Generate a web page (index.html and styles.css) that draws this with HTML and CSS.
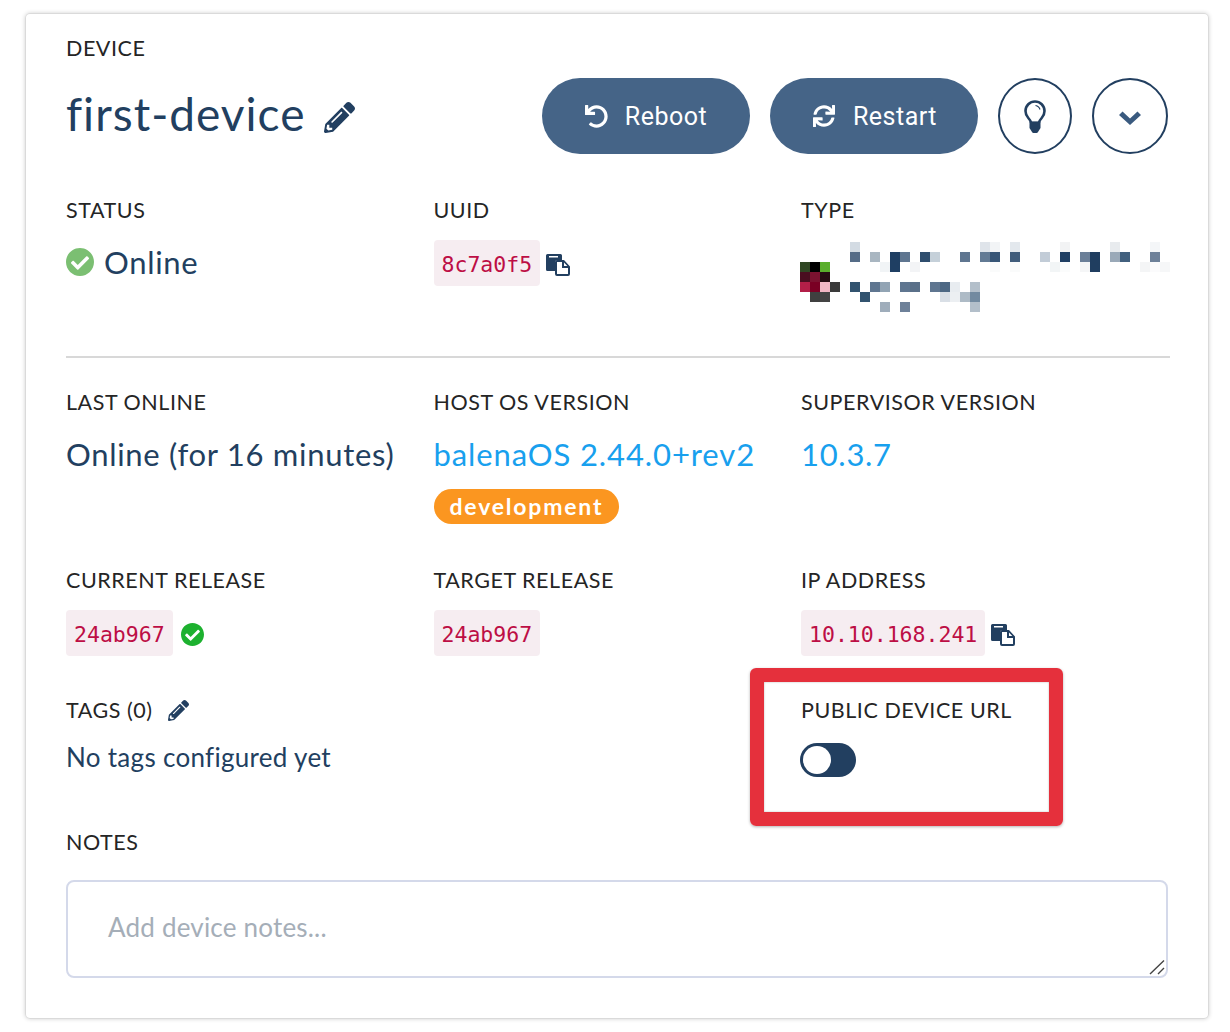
FILE: index.html
```html
<!DOCTYPE html>
<html lang="en">
<head>
<meta charset="utf-8">
<title>first-device</title>
<link rel="stylesheet" href="styles.css">
</head>
<body>
<svg class="defs" width="0" height="0" aria-hidden="true">
  <defs>
    <symbol id="i-pencil" viewBox="0 0 512 512"><path d="M497.9 142.1l-46.1 46.1c-4.7 4.7-12.3 4.7-17 0l-111-111c-4.7-4.7-4.7-12.3 0-17l46.1-46.1c18.7-18.7 49.1-18.7 67.9 0l60.1 60.1c18.8 18.7 18.8 49.1 0 67.9zM284.2 99.8L21.6 362.4.4 483.9c-2.9 16.4 11.4 30.6 27.8 27.8l121.5-21.3 262.6-262.6c4.7-4.7 4.7-12.3 0-17l-111-111c-4.8-4.7-12.4-4.7-17.1 0zM124.1 339.9c-5.5-5.5-5.5-14.3 0-19.8l154-154c5.5-5.5 14.3-5.5 19.8 0s5.5 14.3 0 19.8l-154 154c-5.5 5.5-14.3 5.5-19.8 0zM88 424h48v36.3l-64.5 11.3-31.1-31.1L51.7 376H88v48z"/></symbol>
    <symbol id="i-check" viewBox="8 8 496 496"><path d="M504 256c0 136.967-111.033 248-248 248S8 392.967 8 256 119.033 8 256 8s248 111.033 248 248zM227.314 387.314l184-184c6.248-6.248 6.248-16.379 0-22.627l-22.627-22.627c-6.248-6.249-16.379-6.249-22.628 0L216 308.118l-70.059-70.059c-6.248-6.248-16.379-6.248-22.628 0l-22.627 22.627c-6.248 6.248-6.248 16.379 0 22.627l104 104c6.249 6.249 16.379 6.249 22.628.001z"/></symbol>
    <symbol id="i-copy" viewBox="0 0 24 22"><path d="M1.5 0h13a1.500 1.500 0 0 1 1.500 1.500V6h-4.500a2.500 2.500 0 0 0-2.500 2.500V17H1.500A1.500 1.500 0 0 1 0 15.500V1.500A1.500 1.500 0 0 1 1.500 0z"/><rect x="3" y="2" width="9" height="1.500" fill="#fff"/><path fill="#fff" d="M10 7h7v6h6v8H10z"/><path d="M9 8a2 2 0 0 1 2-2h7l6 6.500V20a2 2 0 0 1-2 2H11a2 2 0 0 1-2-2zm2 0v12h11v-6h-6V8zm7 .500V12h3.300z"/></symbol>
  </defs>
</svg>

<main class="card">
  <p class="label label-device">DEVICE</p>
  <header class="head">
    <h1 class="title">first-device</h1>
    <svg class="title-pencil icon"><use href="#i-pencil"/></svg>
    <div class="actions">
      <button class="btn" type="button">
        <svg class="btn-icon" viewBox="0 0 512 512"><path d="M212.333 224.333H12c-6.627 0-12-5.373-12-12V12C0 5.373 5.373 0 12 0h48c6.627 0 12 5.373 12 12v78.112C117.773 39.279 184.26 7.470 258.175 8.007c136.906.994 246.448 111.623 246.157 248.532C504.041 393.258 393.120 504 256.333 504c-64.089 0-122.496-24.313-166.510-64.215-5.099-4.622-5.334-12.554-.467-17.420l33.967-33.967c4.474-4.474 11.662-4.717 16.401-.525C170.760 415.336 211.580 432 256.333 432c97.268 0 176-78.716 176-176 0-97.267-78.716-176-176-176-58.496 0-110.280 28.476-142.274 72.333h98.274c6.627 0 12 5.373 12 12v48c0 6.627-5.373 12-12 12z"/></svg>
        Reboot
      </button>
      <button class="btn btn-restart" type="button">
        <svg class="btn-icon" viewBox="0 0 512 512"><path d="M440.650 12.570l4 82.770A247.160 247.160 0 0 0 255.830 8C134.730 8 33.910 94.920 12.290 209.820A12 12 0 0 0 24.090 224h49.050a12 12 0 0 0 11.670-9.260 175.910 175.910 0 0 1 317-56.940l-101.460-4.860a12 12 0 0 0-12.570 12v47.410a12 12 0 0 0 12 12H500a12 12 0 0 0 12-12V12a12 12 0 0 0-12-12h-47.370a12 12 0 0 0-11.980 12.570zM255.830 432a175.610 175.610 0 0 1-146-77.800l101.800 4.870a12 12 0 0 0 12.570-12v-47.400a12 12 0 0 0-12-12H12a12 12 0 0 0-12 12V500a12 12 0 0 0 12 12h47.350a12 12 0 0 0 12-12.600l-4.150-82.570A247.170 247.170 0 0 0 255.830 504c121.110 0 221.930-86.920 243.550-201.820a12 12 0 0 0-11.800-14.180h-49.050a12 12 0 0 0-11.670 9.260A175.860 175.860 0 0 1 255.830 432z"/></svg>
        Restart
      </button>
      <button class="round round-bulb" type="button" aria-label="Hint">
        <svg class="bulb" viewBox="0 0 22 33">
          <path class="bulb-glass" d="M11 1.500a9.500 9.500 0 0 0-9.500 9.500c0 3 1 5 2.800 7 1.500 1.700 2.700 3.500 3 5h7.400c.3-1.500 1.500-3.300 3-5 1.800-2 2.800-4 2.800-7A9.500 9.500 0 0 0 11 1.500z"/>
          <path class="bulb-shine" d="M11.500 5.500a5.500 5.500 0 0 1 4.500 4"/>
          <path class="bulb-base" d="M5.500 21.500h11V28l-2.500 4a2 2 0 0 1-1.500 1h-3a2 2 0 0 1-1.500-1l-2.500-4z"/>
        </svg>
      </button>
      <button class="round" type="button" aria-label="More">
        <svg class="chev" viewBox="0 0 22 14"><path d="M0 4L3.500.5 11 7.500 18.500.5 22 4 11 14z"/></svg>
      </button>
    </div>
  </header>

  <section class="grid row-status">
    <div>
      <p class="label">STATUS</p>
      <div class="value value-text"><svg class="status-check"><use href="#i-check"/></svg>Online</div>
    </div>
    <div>
      <p class="label">UUID</p>
      <div class="value"><code class="code">8c7a0f5</code><svg class="copy icon"><use href="#i-copy"/></svg></div>
    </div>
    <div>
      <p class="label">TYPE</p>
      <svg class="pixels" width="370" height="70" viewBox="800 242 370 70" shape-rendering="crispEdges" role="img" aria-label="Blurred device type">
        <g>
          <rect x="850" y="242" width="10" height="10" fill="#d3dbe3"/><rect x="980" y="242" width="10" height="10" fill="#dfe4ea"/><rect x="990" y="242" width="10" height="10" fill="#f2f4f6"/><rect x="1010" y="242" width="10" height="10" fill="#e3e8ed"/><rect x="1060" y="242" width="10" height="10" fill="#f2f3f4"/><rect x="1110" y="242" width="10" height="10" fill="#e8ebee"/><rect x="1150" y="242" width="10" height="10" fill="#f4f6f8"/>
        </g>
        <g>
          <rect x="850" y="252" width="10" height="10" fill="#556c87"/><rect x="870" y="252" width="10" height="10" fill="#a9b6c1"/><rect x="890" y="252" width="10" height="10" fill="#1f3f63"/><rect x="900" y="252" width="10" height="10" fill="#5f7690"/><rect x="920" y="252" width="10" height="10" fill="#2f4e6e"/><rect x="930" y="252" width="10" height="10" fill="#c5d0d9"/><rect x="960" y="252" width="10" height="10" fill="#5f7690"/><rect x="980" y="252" width="10" height="10" fill="#627a94"/><rect x="990" y="252" width="10" height="10" fill="#375576"/><rect x="1010" y="252" width="10" height="10" fill="#405c7b"/><rect x="1040" y="252" width="10" height="10" fill="#c2ccd7"/><rect x="1060" y="252" width="10" height="10" fill="#1f3f63"/><rect x="1080" y="252" width="10" height="10" fill="#6b7f98"/><rect x="1090" y="252" width="10" height="10" fill="#203e60"/><rect x="1110" y="252" width="10" height="10" fill="#9aa9b8"/><rect x="1120" y="252" width="10" height="10" fill="#42607e"/><rect x="1150" y="252" width="10" height="10" fill="#6e8199"/>
        </g>
        <g>
          <rect x="800" y="262" width="10" height="10" fill="#2f4623"/><rect x="810" y="262" width="10" height="10" fill="#000"/><rect x="820" y="262" width="10" height="10" fill="#5aae2c"/><rect x="880" y="262" width="10" height="10" fill="#f1f4f6"/><rect x="890" y="262" width="10" height="10" fill="#1f3f63"/><rect x="910" y="262" width="10" height="10" fill="#f3f4f6"/><rect x="990" y="262" width="10" height="10" fill="#fafbfb"/><rect x="1010" y="262" width="10" height="10" fill="#fafbfb"/><rect x="1050" y="262" width="10" height="10" fill="#f2f5f6"/><rect x="1060" y="262" width="10" height="10" fill="#fbfcfc"/><rect x="1080" y="262" width="10" height="10" fill="#f5f6f7"/><rect x="1090" y="262" width="10" height="10" fill="#203e60"/><rect x="1140" y="262" width="10" height="10" fill="#f4f5f6"/><rect x="1150" y="262" width="10" height="10" fill="#fbfbfc"/><rect x="1160" y="262" width="10" height="10" fill="#f6f7f8"/>
        </g>
        <g>
          <rect x="800" y="272" width="10" height="10" fill="#4a0e20"/><rect x="810" y="272" width="10" height="10" fill="#7b1230"/><rect x="820" y="272" width="10" height="10" fill="#270d13"/>
        </g>
        <g>
          <rect x="800" y="282" width="10" height="10" fill="#b31f48"/><rect x="810" y="282" width="10" height="10" fill="#7a0024"/><rect x="820" y="282" width="10" height="10" fill="#f2b7c4"/><rect x="830" y="282" width="10" height="10" fill="#3a3a3a"/><rect x="850" y="282" width="10" height="10" fill="#32536f"/><rect x="870" y="282" width="10" height="10" fill="#5f7690"/><rect x="880" y="282" width="10" height="10" fill="#92a4b4"/><rect x="900" y="282" width="10" height="10" fill="#5f7690"/><rect x="910" y="282" width="10" height="10" fill="#5a7089"/><rect x="930" y="282" width="10" height="10" fill="#5f7690"/><rect x="940" y="282" width="10" height="10" fill="#4d6884"/><rect x="950" y="282" width="10" height="10" fill="#e8ecf0"/><rect x="970" y="282" width="10" height="10" fill="#b3bfca"/>
        </g>
        <g>
          <rect x="810" y="292" width="10" height="10" fill="#404040"/><rect x="820" y="292" width="10" height="10" fill="#444"/><rect x="860" y="292" width="10" height="10" fill="#32536f"/><rect x="940" y="292" width="10" height="10" fill="#d9dfe6"/><rect x="950" y="292" width="10" height="10" fill="#eceff2"/><rect x="960" y="292" width="10" height="10" fill="#aebbc6"/><rect x="970" y="292" width="10" height="10" fill="#728aa0"/>
        </g>
        <g>
          <rect x="880" y="302" width="10" height="10" fill="#9fadbb"/><rect x="900" y="302" width="10" height="10" fill="#6e8199"/><rect x="970" y="302" width="10" height="10" fill="#b3bfca"/>
        </g>
      </svg>
    </div>
  </section>

  <hr class="divider">

  <section class="grid row-online">
    <div>
      <p class="label">LAST ONLINE</p>
      <div class="value value-text">Online (for 16 minutes)</div>
    </div>
    <div>
      <p class="label">HOST OS VERSION</p>
      <div class="value value-text link link-os">balenaOS 2.44.0+rev2</div>
      <span class="badge">development</span>
    </div>
    <div>
      <p class="label">SUPERVISOR VERSION</p>
      <div class="value value-text link">10.3.7</div>
    </div>
  </section>

  <section class="grid row-release">
    <div>
      <p class="label">CURRENT RELEASE</p>
      <div class="value"><code class="code">24ab967</code><svg class="release-check"><use href="#i-check"/></svg></div>
    </div>
    <div>
      <p class="label">TARGET RELEASE</p>
      <div class="value"><code class="code">24ab967</code></div>
    </div>
    <div>
      <p class="label">IP ADDRESS</p>
      <div class="value"><code class="code">10.10.168.241</code><svg class="copy icon"><use href="#i-copy"/></svg></div>
    </div>
  </section>

  <section class="grid row-tags">
    <div>
      <p class="label">TAGS (0)<svg class="tag-pencil icon"><use href="#i-pencil"/></svg></p>
      <div class="tags-text">No tags configured yet</div>
    </div>
    <div></div>
    <div>
      <p class="label">PUBLIC DEVICE URL</p>
      <span class="toggle"><span class="knob"></span></span>
    </div>
  </section>

  <section class="notes">
    <p class="label">NOTES</p>
    <textarea class="notes-input" placeholder="Add device notes..."></textarea>
    <svg class="grip" viewBox="0 0 16 16"><path d="M1 15L15 1.500M9 15l6-6"/></svg>
  </section>

  <div class="highlight"></div>
</main>
</body>
</html>
```

FILE: styles.css
```css
* { box-sizing: border-box; }

html, body { margin: 0; background: #fff; }

body {
  padding: 13px 21px 13px 25px;
  font-family: "Lato", "Noto Sans", sans-serif;
  color: #223f60;
}

.defs { position: absolute; }

.card {
  position: relative;
  padding: 21px 41px 41px;
  background: #fff;
  border-radius: 5px;
  box-shadow: inset 0 0 0 1px #dadada, 0 0 4px rgba(0, 0, 0, .18);
}

.icon { fill: #223f60; }

.label {
  margin: 0;
  height: 30px;
  font-size: 21.500px;
  line-height: 30px;
  letter-spacing: .55px;
  color: #252525;
}

.label-device { margin-top: -1px; }

.head {
  display: flex;
  align-items: center;
  margin-top: 15px;
}

.title {
  margin: 0 0 4px;
  font-size: 46px;
  font-weight: 400;
  letter-spacing: 1px;
  line-height: 72px;
}

.title-pencil {
  width: 31px;
  height: 31px;
  margin: 2px 0 0 19px;
}

.actions {
  display: flex;
  gap: 20px;
  margin-left: auto;
}

.btn {
  display: flex;
  align-items: center;
  justify-content: center;
  gap: 17px;
  width: 208px;
  height: 76px;
  padding: 0;
  border: 0;
  border-radius: 38px;
  background: #456487;
  color: #fff;
  font-family: "Roboto", sans-serif;
  font-size: 25px;
  letter-spacing: .5px;
}

.btn-icon { width: 23px; height: 23px; fill: #fff; }
.btn-restart { gap: 18px; padding-left: 2px; }
.btn-restart .btn-icon { width: 22px; height: 22px; }

.round {
  display: flex;
  align-items: center;
  justify-content: center;
  width: 76px;
  height: 76px;
  padding: 0;
  border: 2px solid #223f60;
  border-radius: 50%;
  background: #fff;
}

.round-bulb { width: 74px; }

.bulb { width: 22px; height: 33px; }
.bulb-glass { fill: none; stroke: #223f60; stroke-width: 2.600; }
.bulb-shine { fill: none; stroke: #223f60; stroke-width: 1.200; }
.bulb-base { fill: #223f60; }

.chev { width: 22px; height: 14px; margin-top: 4px; fill: #3a5a7f; }

.grid {
  display: grid;
  grid-template-columns: 367.5px 367.5px 1fr;
}

.row-status { margin-top: 41px; }
.row-online { margin-top: 29px; }
.row-release { margin-top: 41px; }
.row-tags { margin-top: 39px; }

.value {
  display: flex;
  align-items: center;
  height: 46px;
  margin-top: 15px;
  font-size: 31px;
  letter-spacing: .7px;
  line-height: 44px;
}

.value-text { padding-bottom: 2px; }

.link { color: #18a0ee; }
.link-os { letter-spacing: .9px; }

.status-check {
  width: 28px;
  height: 28px;
  margin-right: 10px;
  fill: #7bbf72;
}

.release-check {
  width: 23px;
  height: 23px;
  margin: 2px 0 0 8px;
  fill: #1db12f;
}

.code {
  display: block;
  height: 46px;
  padding: 0 8.200px 0 8px;
  border-radius: 4px;
  background: #f6edf1;
  color: #bd0e45;
  font-family: "DejaVu Sans Mono", monospace;
  font-size: 21.500px;
  letter-spacing: 0;
  line-height: 49px;
}

.copy {
  width: 24px;
  height: 22px;
  margin: 4px 0 0 6px;
}

.pixels {
  display: block;
  margin: 17px 0 0 -1px;
}

.divider {
  height: 2px;
  margin: 44px -2px 0 0;
  border: 0;
  background: #d8d8d8;
}

.badge {
  display: inline-block;
  height: 35px;
  margin-top: 11px;
  padding: 0 16px;
  border-radius: 18px;
  background: #fb9620;
  color: #fff;
  font-size: 23px;
  font-weight: 700;
  letter-spacing: 1.800px;
  line-height: 35px;
}

.tag-pencil {
  width: 21px;
  height: 21px;
  margin-left: 15px;
  vertical-align: -3px;
}

.tags-text {
  height: 36px;
  margin-top: 15px;
  font-size: 26px;
  letter-spacing: .3px;
  line-height: 34px;
}

.toggle {
  display: block;
  width: 56px;
  height: 34px;
  margin: 18px 0 0 -1px;
  padding: 3px;
  border-radius: 17px;
  background: #223f60;
}

.knob {
  display: block;
  width: 28px;
  height: 28px;
  border-radius: 50%;
  background: #fff;
}

.notes {
  position: relative;
  margin-top: 50px;
}

.notes-input {
  display: block;
  width: 100%;
  height: 98px;
  margin-top: 23px;
  padding: 29px 40px;
  border: 2px solid #d4d9ea;
  border-radius: 8px;
  outline: 0;
  resize: none;
  font-family: inherit;
  font-size: 26px;
  letter-spacing: .2px;
  line-height: 32px;
  color: #223f60;
}

.notes-input::placeholder { color: #a5aeb8; opacity: 1; }

.grip {
  position: absolute;
  right: 3px;
  bottom: 3px;
  width: 16px;
  height: 16px;
  fill: none;
  stroke: #444;
  stroke-width: 1.400;
}

.highlight {
  position: absolute;
  left: 725px;
  top: 655px;
  width: 313px;
  height: 158px;
  border: 14px solid #e5303c;
  border-radius: 6px;
  box-shadow: 0 1px 3px rgba(0, 0, 0, .3), inset 0 0 2px rgba(0, 0, 0, .3);
  pointer-events: none;
}
```
